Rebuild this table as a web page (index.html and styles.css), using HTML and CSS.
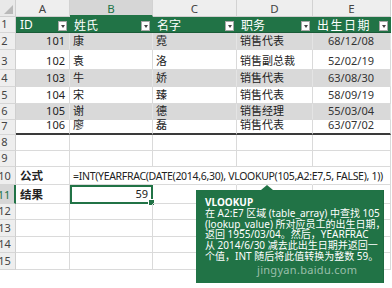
FILE: index.html
```html
<!DOCTYPE html>
<html lang="zh">
<head>
<meta charset="utf-8">
<link rel="stylesheet" href="styles.css">
</head>
<body>
<div class="sheet">
  <div class="corner"><span class="tri"></span></div>
  <div class="ch">A</div><div class="ch sel">B</div><div class="ch">C</div><div class="ch">D</div><div class="ch">E</div>

  <div class="rh">1</div>
  <div class="th">ID<span class="dd"></span></div>
  <div class="th">姓氏<span class="dd"></span></div>
  <div class="th">名字<span class="dd"></span></div>
  <div class="th">职务<span class="dd"></span></div>
  <div class="th wide">出生日期<span class="dd"></span></div>

  <div class="rh">2</div>
  <div class="c g num">101</div><div class="c g">康</div><div class="c g">霓</div><div class="c g">销售代表</div><div class="c g date">68/12/08</div>
  <div class="rh">3</div>
  <div class="c num">102</div><div class="c">袁</div><div class="c">洛</div><div class="c">销售副总裁</div><div class="c date">52/02/19</div>
  <div class="rh">4</div>
  <div class="c g num">103</div><div class="c g">牛</div><div class="c g">娇</div><div class="c g">销售代表</div><div class="c g date">63/08/30</div>
  <div class="rh">5</div>
  <div class="c num">104</div><div class="c">宋</div><div class="c">臻</div><div class="c">销售代表</div><div class="c date">58/09/19</div>
  <div class="rh">6</div>
  <div class="c g num">105</div><div class="c g">谢</div><div class="c g">德</div><div class="c g">销售经理</div><div class="c g date">55/03/04</div>
  <div class="rh">7</div>
  <div class="c last num">106</div><div class="c last">廖</div><div class="c last">磊</div><div class="c last">销售代表</div><div class="c last date">63/07/02</div>

  <div class="rh">8</div><div class="c"></div><div class="c"></div><div class="c"></div><div class="c"></div><div class="c"></div>
  <div class="rh">9</div><div class="c"></div><div class="c"></div><div class="c"></div><div class="c"></div><div class="c"></div>

  <div class="rh">10</div>
  <div class="c label">公式</div>
  <div class="c over formula">=INT(YEARFRAC(DATE(2014,6,30), VLOOKUP(105,A2:E7,5, FALSE), 1))</div>
  <div class="c over"></div><div class="c over"></div><div class="c"></div>

  <div class="rh rsel">11</div>
  <div class="c label">结果</div>
  <div class="c num active">59<span class="handle"></span></div>
  <div class="c"></div><div class="c"></div><div class="c"></div>

  <div class="rh">12</div><div class="c"></div><div class="c"></div><div class="c"></div><div class="c"></div><div class="c"></div>
  <div class="rh">13</div><div class="c"></div><div class="c"></div><div class="c"></div><div class="c"></div><div class="c"></div>
  <div class="rh">14</div><div class="c"></div><div class="c"></div><div class="c"></div><div class="c"></div><div class="c"></div>
  <div class="rh">15</div><div class="c"></div><div class="c"></div><div class="c"></div><div class="c"></div><div class="c"></div>
</div>

<div class="tip">
  <div class="tip-title">VLOOKUP</div>
  <div>在 A2:E7 区域 (table_array) 中查找 105</div>
  <div>(lookup_value) 所对应员工的出生日期，</div>
  <div>返回 1955/03/04。然后，YEARFRAC</div>
  <div>从 2014/6/30 减去此出生日期并返回一</div>
  <div>个值，INT 随后将此值转换为整数 59。</div>
  <div class="wm">jingyan.baidu.com</div>
</div>
</body>
</html>
```

FILE: styles.css
```css
html, body {
  margin: 0;
  padding: 0;
  background: #ffffff;
}
body {
  width: 392px;
  height: 288px;
  overflow: hidden;
  position: relative;
  font-family: "Noto Sans", "Noto Sans CJK SC", sans-serif;
  color: #222;
}
.sheet {
  display: grid;
  grid-template-columns: 16px 54px 83px 84px 76px 78px;
  grid-template-rows: 17px 16px 17px 20px 17px 17px 16px 15px 16px 16px 18px 19px 16px 17px 16px 17px;
  width: 391px;
}
.sheet > div {
  box-sizing: border-box;
  min-width: 0;
}
.corner {
  background: #e9e9e9;
  border-right: 1px solid #cfcfcf;
  border-bottom: 1px solid #cfcfcf;
  position: relative;
}
.tri {
  position: absolute;
  right: 2px;
  bottom: 2px;
  width: 0;
  height: 0;
  border-left: 9px solid transparent;
  border-bottom: 9px solid #b9b9b9;
}
.ch {
  background: #eeeeee;
  border-right: 1px solid #d2d2d2;
  border-bottom: 1px solid #cfcfcf;
  display: flex;
  align-items: center;
  justify-content: center;
  font-size: 11.5px;
  color: #444;
  padding-top: 1px;
}
.ch.sel {
  background: #d6d6d6;
  color: #217346;
  border-bottom: 2px solid #217346;
}
.rh {
  background: #eeeeee;
  border-right: 1px solid #cfcfcf;
  border-bottom: 1px solid #d6d6d6;
  display: flex;
  align-items: flex-end;
  justify-content: center;
  padding-right: 6px;
  padding-bottom: 1px;
  font-size: 11px;
  color: #444;
  white-space: nowrap;
}
.rh.rsel {
  background: #d6d6d6;
  color: #217346;
  border-right: 2px solid #217346;
}
.th {
  background: #217346;
  color: #ffffff;
  font-size: 12px;
  display: flex;
  align-items: center;
  padding-left: 4px;
  position: relative;
  border-bottom: 1px solid #1a5c38;
}
.th.wide {
  letter-spacing: 1.5px;
}
.dd {
  position: absolute;
  right: 3px;
  top: 4px;
  width: 9px;
  height: 10px;
  box-sizing: border-box;
  background: #ffffff;
  border: 1px solid #a8a8a8;
}
.dd::after {
  content: "";
  position: absolute;
  left: 2px;
  top: 3px;
  border-left: 2px solid transparent;
  border-right: 2px solid transparent;
  border-top: 3px solid #444;
}
.c {
  border-right: 1px solid #dadada;
  border-bottom: 1px solid #dadada;
  font-size: 11px;
  display: flex;
  align-items: flex-end;
  padding: 0 4px 1px 3px;
  white-space: nowrap;
  line-height: 14px;
  position: relative;
}
.c.g {
  background: #d9d9d9;
  border-right-color: #e4e4e4;
  border-bottom-color: #d9d9d9;
}
.c.last {
  border-bottom: 2px solid #3a3a3a;
}
.num {
  justify-content: flex-end;
}
.date {
  justify-content: center;
  color: #333;
}
.label {
  font-weight: bold;
  font-size: 11.5px;
  padding-left: 4px;
}
.c.over {
  border-right-color: transparent;
}
.formula {
  font-size: 10.5px;
  letter-spacing: -0.3px;
  overflow: visible;
  padding-left: 3px;
}
.active {
  border: 2px solid #217346;
  padding-right: 3px;
}
.handle {
  position: absolute;
  right: -4px;
  bottom: -4px;
  width: 5px;
  height: 5px;
  background: #217346;
  border: 1px solid #ffffff;
}
.tip {
  position: absolute;
  left: 196px;
  top: 190px;
  width: 188px;
  height: 93px;
  box-sizing: border-box;
  background: #217346;
  color: #ffffff;
  font-size: 10px;
  line-height: 10.8px;
  padding: 7px 0 0 9px;
  white-space: nowrap;
  border-right: 1px solid #1c6a3f;
}
.tip::before {
  content: "";
  position: absolute;
  left: 65px;
  top: -5px;
  border-left: 6px solid transparent;
  border-right: 6px solid transparent;
  border-bottom: 5px solid #217346;
}
.tip-title {
  font-weight: bold;
}
.wm {
  margin-top: 3px;
  margin-left: 52px;
  font-size: 11px;
  color: rgba(255, 255, 255, 0.55);
  letter-spacing: 0.3px;
}
```
